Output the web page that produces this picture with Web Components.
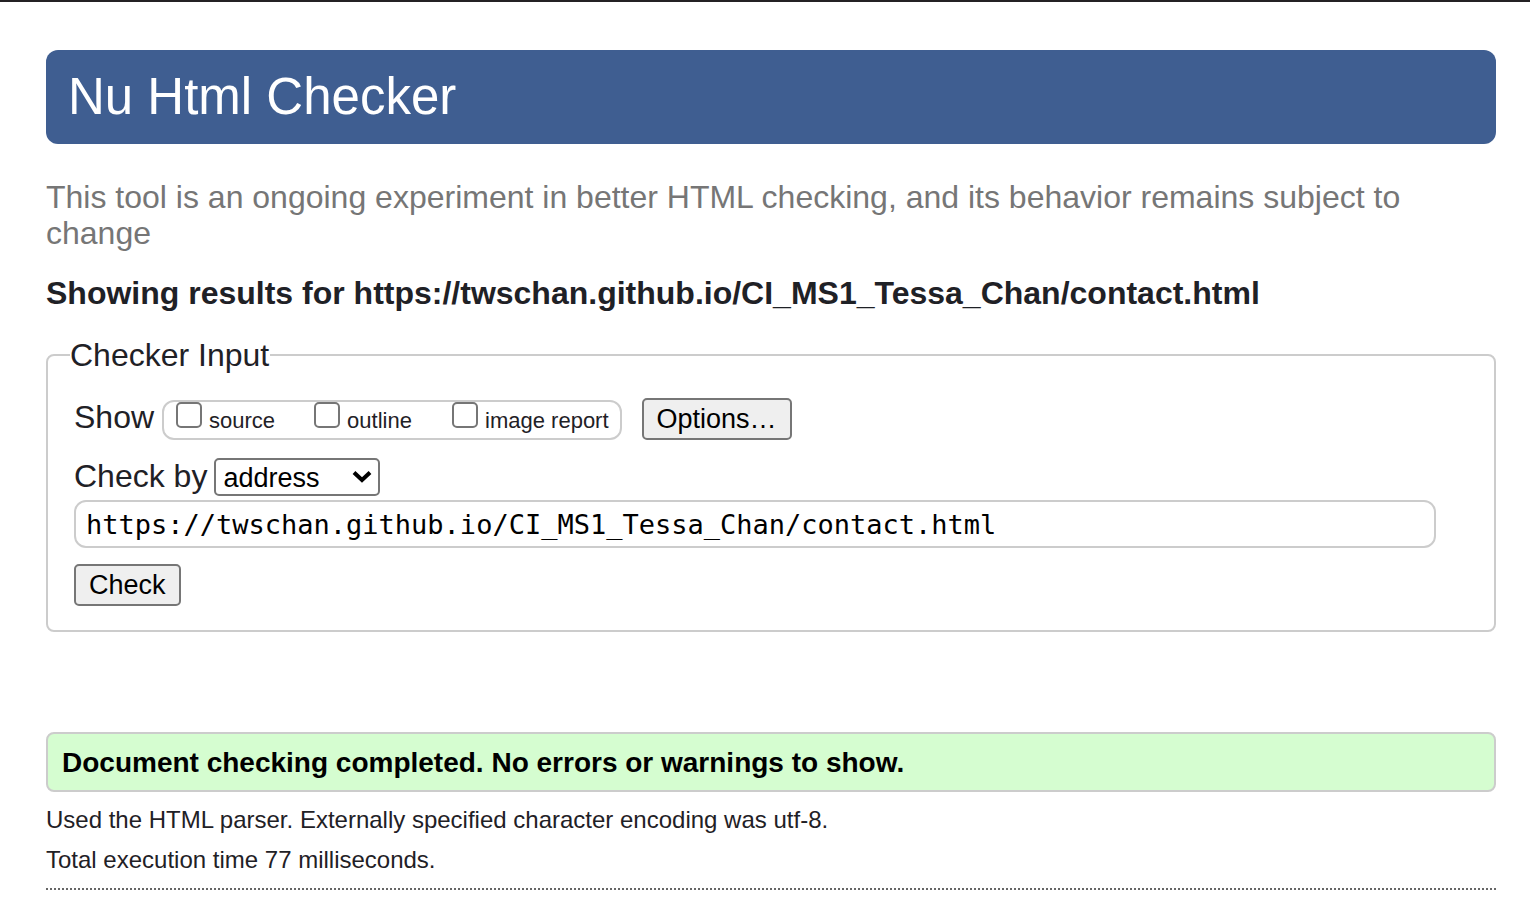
<!DOCTYPE html>
<html lang="en">
<head>
<meta charset="utf-8">
<title>Nu Html Checker</title>
<style>
  body {
    margin: 0;
    background: #fff;
    color: #1f2126;
    font: 32px/36px "Liberation Sans", Arial, sans-serif;
    border-top: 2px solid #242124;
  }
  main { padding: 48px 34px 34px 46px; }
</style>
</head>
<body>
<main>
  <checker-banner>Nu Html Checker</checker-banner>
  <checker-intro>
    <span slot="tagline">This tool is an ongoing experiment in better HTML checking, and its behavior remains subject to change</span>
    <span slot="title">Showing results for https://twschan.github.io/CI_MS1_Tessa_Chan/contact.html</span>
  </checker-intro>
  <checker-form address="https://twschan.github.io/CI_MS1_Tessa_Chan/contact.html"></checker-form>
  <checker-results>
    <span slot="status">Document checking completed. No errors or warnings to show.</span>
    <span slot="parser">Used the HTML parser. Externally specified character encoding was utf-8.</span>
    <span slot="time">Total execution time 77 milliseconds.</span>
  </checker-results>
</main>

<script>
class ShadowElement extends HTMLElement {
  constructor() {
    super();
    const template = document.createElement("template");
    template.innerHTML = this.constructor.markup;
    this.attachShadow({ mode: "open" }).append(template.content.cloneNode(true));
  }
}

customElements.define("checker-banner", class extends ShadowElement {
  static markup = `
    <style>
      :host { display: block; background: #3f5e91; color: #fff; border-radius: 12px; padding: 17px 22px; }
      h1 { margin: 0; font-size: 51px; line-height: 60px; font-weight: normal; }
    </style>
    <h1><slot></slot></h1>`;
});

customElements.define("checker-intro", class extends ShadowElement {
  static markup = `
    <style>
      :host { display: block; padding-top: 35px; }
      p { margin: 0; color: #767676; }
      h2 { margin: 24px 0 0; font-size: 32px; line-height: 36px; font-weight: bold; }
    </style>
    <p><slot name="tagline"></slot></p>
    <h2><slot name="title"></slot></h2>`;
});

customElements.define("checker-option", class extends ShadowElement {
  static markup = `
    <style>
      :host { display: block; font-size: 22px; line-height: 26px; }
      label { display: flex; align-items: flex-start; gap: 7px; }
      input {
        appearance: none; box-sizing: border-box; flex: none;
        width: 26px; height: 26px; margin: 0;
        border: 2px solid #767676; border-radius: 5px; background: #fff;
      }
      input:checked { background: #0075ff; }
      span { padding-top: 6px; white-space: nowrap; }
    </style>
    <label><input type="checkbox"><span><slot></slot></span></label>`;
});

customElements.define("checker-button", class extends ShadowElement {
  static markup = `
    <style>
      :host { display: block; }
      button {
        display: block; margin: 0; padding: 4px 13px;
        border: 2px solid #767676; border-radius: 5px;
        background: #efefef; color: #000;
        font: inherit; font-size: 27px; line-height: 30px;
      }
    </style>
    <button type="button"><slot></slot></button>`;
});

customElements.define("checker-form", class extends ShadowElement {
  static markup = `
    <style>
      :host { display: block; margin-top: 26px; }
      fieldset { margin: 0; min-width: 0; padding: 25px 58px 24px 26px; border: 2px solid #ccc; border-radius: 8px; }
      legend { margin-left: -4px; padding: 0 1px 0 0; }
      .row { display: flex; align-items: flex-start; }
      .show { gap: 8px; }
      .show > span { padding-top: 1px; }
      .group {
        display: grid; grid-template-columns: 138px 138px auto;
        box-sizing: border-box; height: 40px; margin: 2px 12px 0 0; padding: 0 11px 0 12px;
        border: 2px solid #ccc; border-radius: 12px;
      }
      .by { margin-top: 18px; gap: 7px; }
      .picker { position: relative; }
      select {
        appearance: none; display: block; box-sizing: border-box;
        width: 166px; height: 38px; margin: 0; padding: 0 7px 2px;
        border: 2px solid #767676; border-radius: 5px;
        background: #fff; color: #000; font: inherit; font-size: 27px;
      }
      .picker svg { position: absolute; right: 8px; top: 12px; pointer-events: none; }
      .url {
        display: block; box-sizing: border-box; width: 100%; height: 48px;
        margin: 4px 0 16px; padding: 0 10px;
        border: 2px solid #ccc; border-radius: 12px; background: #fff; color: #000;
        font: 27px "DejaVu Sans Mono", monospace;
      }
    </style>
    <form>
      <fieldset>
        <legend>Checker Input</legend>
        <div class="row show">
          <span>Show</span>
          <div class="group">
            <checker-option>source</checker-option>
            <checker-option>outline</checker-option>
            <checker-option>image report</checker-option>
          </div>
          <checker-button>Options…</checker-button>
        </div>
        <div class="row by">
          <label for="method">Check by</label>
          <div class="picker">
            <select id="method">
              <option>address</option>
              <option>file upload</option>
              <option>text input</option>
            </select>
            <svg width="20" height="14" viewBox="0 0 20 14" aria-hidden="true">
              <path d="M2 2.5L10 10L18 2.5" fill="none" stroke="#000" stroke-width="4"/>
            </svg>
          </div>
        </div>
        <input class="url" type="url" aria-label="Address">
        <checker-button>Check</checker-button>
      </fieldset>
    </form>`;
  connectedCallback() {
    this.shadowRoot.querySelector(".url").value = this.getAttribute("address") || "";
  }
});

customElements.define("checker-results", class extends ShadowElement {
  static markup = `
    <style>
      :host { display: block; margin-top: 100px; font-size: 24px; line-height: 28px; }
      .status {
        margin: 0 0 14px; padding: 13px 14px 11px;
        border: 2px solid #ccc; border-radius: 8px;
        background: #d5fdd0; color: #000;
        font-size: 28px; line-height: 32px; font-weight: bold;
      }
      p { margin: 0 0 12px; }
      hr { margin: 14px 0 0; border: 0; border-top: 2px dotted #666; }
    </style>
    <p class="status"><slot name="status"></slot></p>
    <p><slot name="parser"></slot></p>
    <p><slot name="time"></slot></p>
    <hr>`;
});
</script>
</body>
</html>
